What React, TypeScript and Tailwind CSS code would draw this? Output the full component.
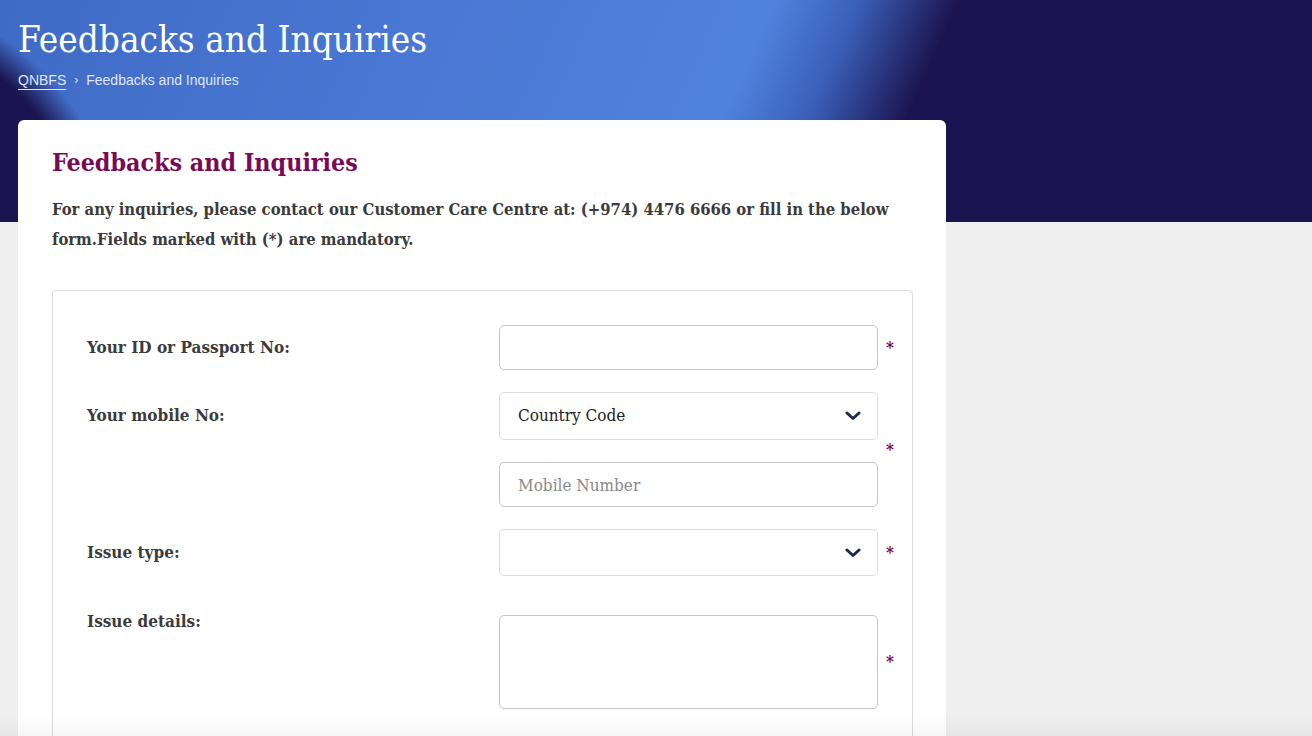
import { useState } from 'react'

const serif = "font-['DejaVu_Serif_Condensed',_'DejaVu_Serif',_'Liberation_Serif',_serif] font-stretch-condensed"

function Chevron() {
  return (
    <svg width="16" height="10" viewBox="0 0 16 10" className="shrink-0">
      <path d="M2 2l6 5.5L14 2" fill="none" stroke="#1c2a52" strokeWidth="3" strokeLinecap="round" strokeLinejoin="round" />
    </svg>
  )
}

function Star() {
  return <span className="text-[#7a0a55] text-[17px] font-bold leading-none">*</span>
}

export default function App() {
  const [passport, setPassport] = useState('')
  const [mobile, setMobile] = useState('')
  const [details, setDetails] = useState('')

  return (
    <div className="w-full min-h-[100dvh] bg-[#efefef] bg-no-repeat bg-[length:100%_222px] bg-[radial-gradient(circle_at_-150px_262px,#1c1450_238px,rgba(28,20,80,0)_272px),linear-gradient(114deg,#3f6bc6_0%,#4a77d3_30%,#4f82dd_55%,#3a5fb8_61%,#1c1450_68%,#1c1450_100%)]">
      <div className="pt-[18px] px-[18px]">
        <h1 className={`${serif} text-white text-[36.6px] leading-[44px] font-normal`}>Feedbacks and Inquiries</h1>
        <div className="mt-[8px] flex items-center gap-[8px] font-['Liberation_Sans',_Arial,_sans-serif] text-[14px] leading-[20px] text-[#dfe6f7]">
          <a href="#" className="underline underline-offset-[4px] decoration-[#dfe6f7]">QNBFS</a>
          <span className="text-[12px]">›</span>
          <span>Feedbacks and Inquiries</span>
        </div>
      </div>

      <div className={`${serif} mt-[30px] ml-[18px] w-[928px] bg-white rounded-[6px] pt-[25px] pl-[34px] pr-[33px] pb-[40px]`}>
        <h2 className="text-[#7a0a55] text-[24.8px] leading-[36px] font-bold">Feedbacks and Inquiries</h2>
        <p className="mt-[14px] text-[#3b3b3b] text-[16.5px] leading-[30px] font-bold">
          For any inquiries, please contact our Customer Care Centre at: (+974) 4476 6666 or fill in the below form.Fields marked with (*) are mandatory.
        </p>

        <div className="mt-[35px] border border-[#dcdcdc] rounded-[4px] pt-[34px] pl-[34px] pb-[40px] flex flex-col">
          <div className="flex items-center">
            <label className="flex-1 text-[17px] font-bold text-[#3b3b3b]">Your ID or Passport No:</label>
            <input value={passport} onChange={(e) => setPassport(e.target.value)} className="w-[379px] h-[45px] border border-[#c6c6c6] rounded-[5px] px-[18px] text-[17px] outline-none" />
            <div className="w-[34px] pl-[8px]"><Star /></div>
          </div>

          <div className="mt-[22px] flex items-center">
            <div className="flex-1 self-start h-[48px] flex items-center">
              <label className="text-[17px] font-bold text-[#3b3b3b]">Your mobile No:</label>
            </div>
            <div className="w-[379px] flex flex-col gap-[22px]">
              <div className="h-[48px] border border-[#dedede] rounded-[5px] pl-[18px] pr-[16px] flex items-center justify-between">
                <span className="text-[17px] text-[#222]">Country Code</span>
                <Chevron />
              </div>
              <input value={mobile} onChange={(e) => setMobile(e.target.value)} placeholder="Mobile Number" className="h-[45px] border border-[#c6c6c6] rounded-[5px] px-[18px] text-[17px] text-[#222] placeholder:text-[#8a8a8a] outline-none" />
            </div>
            <div className="w-[34px] pl-[8px]"><Star /></div>
          </div>

          <div className="mt-[22px] flex items-center">
            <label className="flex-1 text-[17px] font-bold text-[#3b3b3b]">Issue type:</label>
            <div className="w-[379px] h-[47px] border border-[#dedede] rounded-[5px] pl-[18px] pr-[16px] flex items-center justify-end">
              <Chevron />
            </div>
            <div className="w-[34px] pl-[8px]"><Star /></div>
          </div>

          <div className="mt-[39px] flex items-center">
            <label className="flex-1 self-start -mt-[6px] text-[17px] font-bold text-[#3b3b3b]">Issue details:</label>
            <textarea value={details} onChange={(e) => setDetails(e.target.value)} className="w-[379px] h-[94px] border border-[#c6c6c6] rounded-[5px] px-[18px] py-[10px] text-[17px] outline-none resize-none" />
            <div className="w-[34px] pl-[8px]"><Star /></div>
          </div>
        </div>
      </div>

      <div className="fixed bottom-0 left-0 right-0 h-[22px] pointer-events-none bg-[linear-gradient(to_bottom,rgba(0,0,0,0),rgba(0,0,0,0.035))]" />
    </div>
  )
}
